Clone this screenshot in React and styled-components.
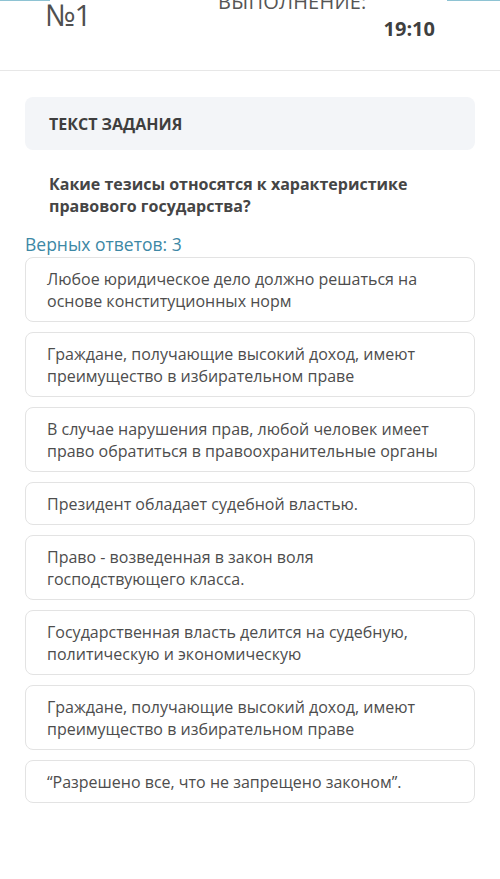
import styled, { createGlobalStyle } from 'styled-components';

const GlobalStyle = createGlobalStyle`
  body {
    margin: 0;
    background: #fff;
    font-family: "Open Sans", "Noto Sans", sans-serif;
    color: #4a4a4a;
  }
`;

const answers = [
  'Любое юридическое дело должно решаться на основе конституционных норм',
  'Граждане, получающие высокий доход, имеют преимущество в избирательном праве',
  'В случае нарушения прав, любой человек имеет право обратиться в правоохранительные органы',
  'Президент обладает судебной властью.',
  'Право - возведенная в закон воля господствующего класса.',
  'Государственная власть делится на судебную, политическую и экономическую',
  'Граждане, получающие высокий доход, имеют преимущество в избирательном праве',
  '“Разрешено все, что не запрещено законом”.',
];

const App = () => {
  return (
    <Page>
      <GlobalStyle />
      <Header>
        <Accent side="left" />
        <Accent side="right" />
        <TaskNum>
          <TaskTitle>ТЕСТ</TaskTitle>
          <TaskNo>№1</TaskNo>
        </TaskNum>
        <Timer>
          <TimerLabel>
            <span>ВРЕМЯ НА</span>
            <span>ВЫПОЛНЕНИЕ:</span>
          </TimerLabel>
          <TimerValue>19:10</TimerValue>
        </Timer>
      </Header>
      <Main>
        <TaskBox>ТЕКСТ ЗАДАНИЯ</TaskBox>
        <Question>Какие тезисы относятся к характеристике правового государства?</Question>
        <Hint>Верных ответов: 3</Hint>
        <List>
          {answers.map((a, i) => (
            <Answer key={i}>{a}</Answer>
          ))}
        </List>
      </Main>
    </Page>
  );
};

const Page = styled.div`
  width: 500px;
  min-height: 879px;
  background: #fff;
`;

const Header = styled.header`
  position: relative;
  height: 71px;
  border-bottom: 1px solid #e7e7e7;
  overflow: hidden;
  display: flex;
  padding: 0 45px;
  box-sizing: border-box;
`;

const Accent = styled.div`
  position: absolute;
  top: 0;
  height: 1px;
  background: #8ec3d3;
  ${p => (p.side === 'left' ? 'left: 0; width: 50px;' : 'right: 0; width: 53px;')}
`;

const TaskNum = styled.div`
  display: flex;
  flex-direction: column;
  margin-top: -38px;
  color: #505050;
`;

const TaskTitle = styled.div`
  font-size: 30px;
  line-height: 38px;
  height: 38px;
  overflow: hidden;
`;

const TaskNo = styled.div`
  font-size: 30px;
  line-height: 30px;
  letter-spacing: -1px;
`;

const Timer = styled.div`
  display: flex;
  margin-left: auto;
  margin-right: 20px;
  gap: 17px;
`;

const TimerLabel = styled.div`
  display: flex;
  flex-direction: column;
  margin-top: -36px;
  font-size: 20px;
  line-height: 25px;
  color: #555;
  letter-spacing: 0.2px;
`;

const TimerValue = styled.div`
  font-size: 20px;
  font-weight: 700;
  color: #3f3f3f;
  margin-top: 15px;
`;

const Main = styled.main`
  padding: 26px 25px 40px 25px;
`;

const TaskBox = styled.div`
  height: 53px;
  background: #f3f5f8;
  border-radius: 8px;
  display: flex;
  align-items: center;
  padding: 0 24px;
  font-size: 16px;
  font-weight: 700;
  color: #3e3e3e;
`;

const Question = styled.div`
  margin: 23px 24px 0;
  font-size: 16px;
  line-height: 22px;
  font-weight: 700;
  color: #454545;
  padding-right: 40px;
`;

const Hint = styled.div`
  margin-top: 17px;
  font-size: 17.5px;
  line-height: 21px;
  color: #3d88a5;
`;

const List = styled.div`
  display: flex;
  flex-direction: column;
  gap: 10px;
  margin-top: 2px;
`;

const Answer = styled.div`
  border: 1px solid #e3e3e3;
  border-radius: 8px;
  padding: 10px 30px 9px 21px;
  font-size: 16px;
  line-height: 22px;
  color: #4d4d4d;
`;

export default App;
